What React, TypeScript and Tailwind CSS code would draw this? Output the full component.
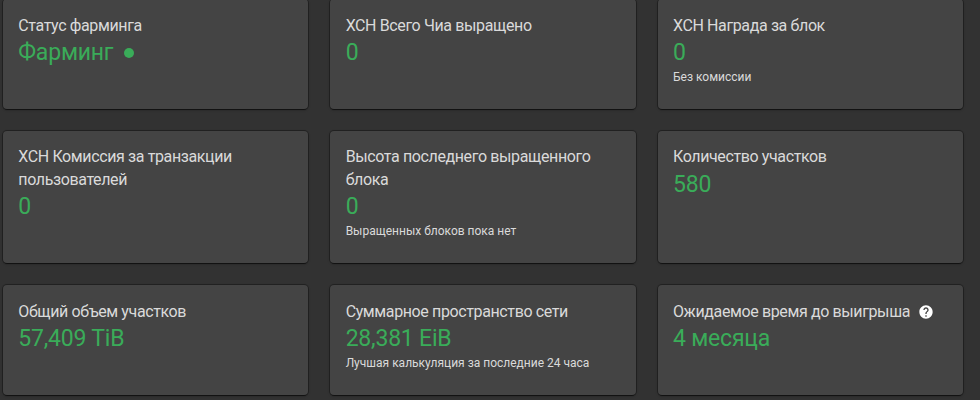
import clsx from "clsx";

interface FarmCardProps {
  title: string;
  value: string;
  description?: string;
  status?: boolean;
  tooltip?: boolean;
}

const cards: FarmCardProps[] = [
  { title: "Статус фарминга", value: "Фарминг", status: true },
  { title: "XCH Всего Чиа выращено", value: "0" },
  { title: "XCH Награда за блок", value: "0", description: "Без комиссии" },
  { title: "XCH Комиссия за транзакции пользователей", value: "0" },
  { title: "Высота последнего выращенного блока", value: "0", description: "Выращенных блоков пока нет" },
  { title: "Количество участков", value: "580" },
  { title: "Общий объем участков", value: "57,409 TiB" },
  { title: "Суммарное пространство сети", value: "28,381 EiB", description: "Лучшая калькуляция за последние 24 часа" },
  { title: "Ожидаемое время до выигрыша", value: "4 месяца", tooltip: true },
];

function HelpIcon() {
  return (
    <svg viewBox="0 0 24 24" className="size-4 shrink-0 fill-white">
      <path d="M12 2C6.48 2 2 6.48 2 12s4.48 10 10 10 10-4.48 10-10S17.52 2 12 2zm1 17h-2v-2h2v2zm2.07-7.75l-.9.92C13.45 12.9 13 13.5 13 15h-2v-.5c0-1.1.45-2.1 1.17-2.83l1.24-1.26c.37-.36.59-.86.59-1.41 0-1.1-.9-2-2-2s-2 .9-2 2H8c0-2.21 1.79-4 4-4s4 1.79 4 4c0 .88-.36 1.68-.93 2.25z" />
    </svg>
  );
}

function FarmCard({ title, value, description, status, tooltip }: FarmCardProps) {
  return (
    <div className="rounded bg-[#444444] pt-[15.5px] pr-4 pl-[15.3px] shadow-[0_0_0_1px_rgba(0,0,0,0.3),0_2px_1px_-1px_rgba(0,0,0,0.4),0_1px_3px_0_rgba(0,0,0,0.2)]">
      <div className={clsx("text-base leading-[22.5px] tracking-[-0.38px] text-[#dadada]", tooltip && "flex items-center gap-2")}>
        {title}
        {tooltip && <HelpIcon />}
      </div>
      <div className="flex items-center gap-[11px] text-[23px] leading-[31px] tracking-[-0.2px] text-[#3aac59]">
        {value}
        {status && <span className="size-2.5 rounded-full bg-[#3aac59]" />}
      </div>
      {description && <p className="text-xs leading-[18px] text-[#dadada]">{description}</p>}
    </div>
  );
}

export default function App() {
  return (
    <div className="flex h-[400px] overflow-hidden bg-[#323232] font-['Roboto',sans-serif]">
      <div className="-mt-px ml-[3px] grid w-[960px] grid-cols-3 grid-rows-[109.5px_132.5px_109.5px] gap-x-[22px] gap-y-[22px]">
        {cards.map((card) => (
          <FarmCard key={card.title} {...card} />
        ))}
      </div>
    </div>
  );
}
